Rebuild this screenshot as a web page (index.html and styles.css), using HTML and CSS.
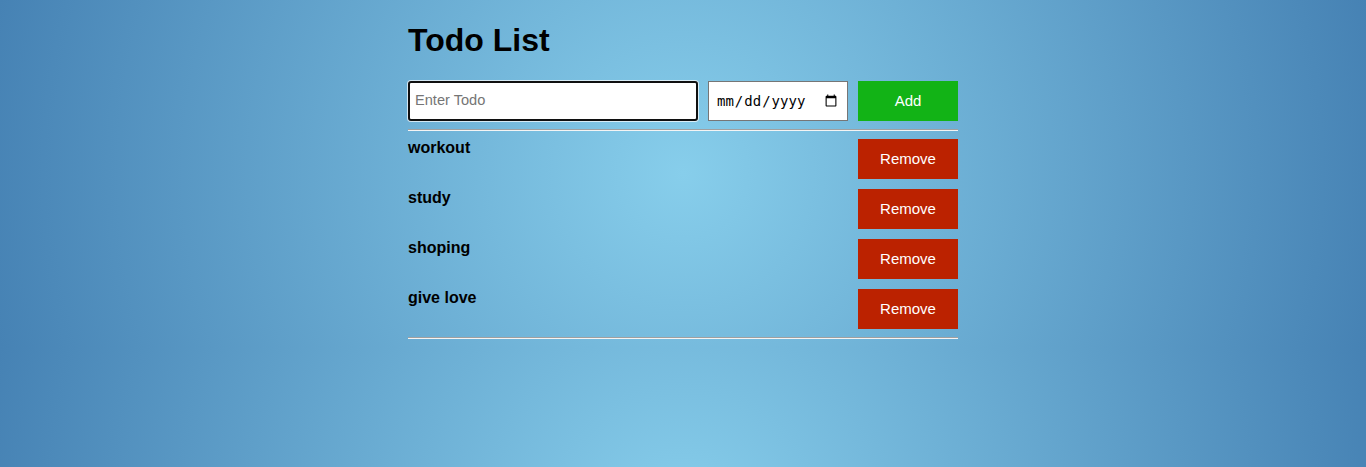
FILE: index.html
```html
<!DOCTYPE html>
<html lang="en">
<head>
<meta charset="utf-8">
<title>Todo List</title>
<link rel="stylesheet" href="styles.css">
</head>
<body>
<div class="app">
  <h1 class="title">Todo List</h1>
  <div class="grid">
    <input class="todo-input" type="text" placeholder="Enter Todo">
    <input class="date-input" type="date">
    <button class="btn btn-add">Add</button>
  </div>
  <hr class="sep">
  <div class="grid list">
    <div class="todo-name">workout</div><div class="todo-date"></div><button class="btn btn-remove">Remove</button>
    <div class="todo-name">study</div><div class="todo-date"></div><button class="btn btn-remove">Remove</button>
    <div class="todo-name">shoping</div><div class="todo-date"></div><button class="btn btn-remove">Remove</button>
    <div class="todo-name">give love</div><div class="todo-date"></div><button class="btn btn-remove">Remove</button>
  </div>
  <hr class="sep">
</div>
</body>
</html>
```

FILE: styles.css
```css
html {
  background: radial-gradient(circle, #87ceeb, #4682b4);
}
body {
  margin: 0;
  font-family: "Liberation Sans", Arial, sans-serif;
  color: #000;
}
.app {
  width: 550px;
  margin: 0 auto;
  display: flow-root;
}
.title {
  font-size: 32px;
  line-height: 37px;
  font-weight: bold;
  margin: 22px 0 22px;
}
.grid {
  display: grid;
  grid-template-columns: 290px 140px 100px;
  column-gap: 10px;
  row-gap: 10px;
}
.todo-input {
  box-sizing: border-box;
  height: 40px;
  margin: 0;
  padding: 0 5px 2px;
  border: 2px solid #101010;
  border-radius: 3px;
  box-shadow: 0 0 0 1px rgba(255,255,255,0.7);
  background: #fff;
  font-family: "Liberation Sans", Arial, sans-serif;
  font-size: 14.6px;
  outline: none;
}
.todo-input::placeholder {
  color: #757575;
}
.date-input {
  box-sizing: border-box;
  height: 40px;
  margin: 0;
  padding: 0 7px;
  border: 1px solid #767676;
  border-radius: 0;
  background: #fff;
  font-family: "DejaVu Sans Mono", monospace;
  font-size: 14px;
  color: #000;
}
.btn {
  height: 40px;
  margin: 0;
  padding: 0 6px 2px;
  border: none;
  color: #fff;
  font-family: "Liberation Sans", Arial, sans-serif;
  font-size: 15px;
  cursor: pointer;
}
.btn-add {
  background: #12b316;
}
.btn-remove {
  background: #bb2200;
}
.todo-name {
  font-weight: bold;
  font-size: 16px;
  line-height: 18px;
}
.sep {
  margin: 8px 0;
  border: none;
  border-top: 1px solid #a0a0a0;
  border-bottom: 1px solid #f4f4f4;
  height: 0;
}
```
